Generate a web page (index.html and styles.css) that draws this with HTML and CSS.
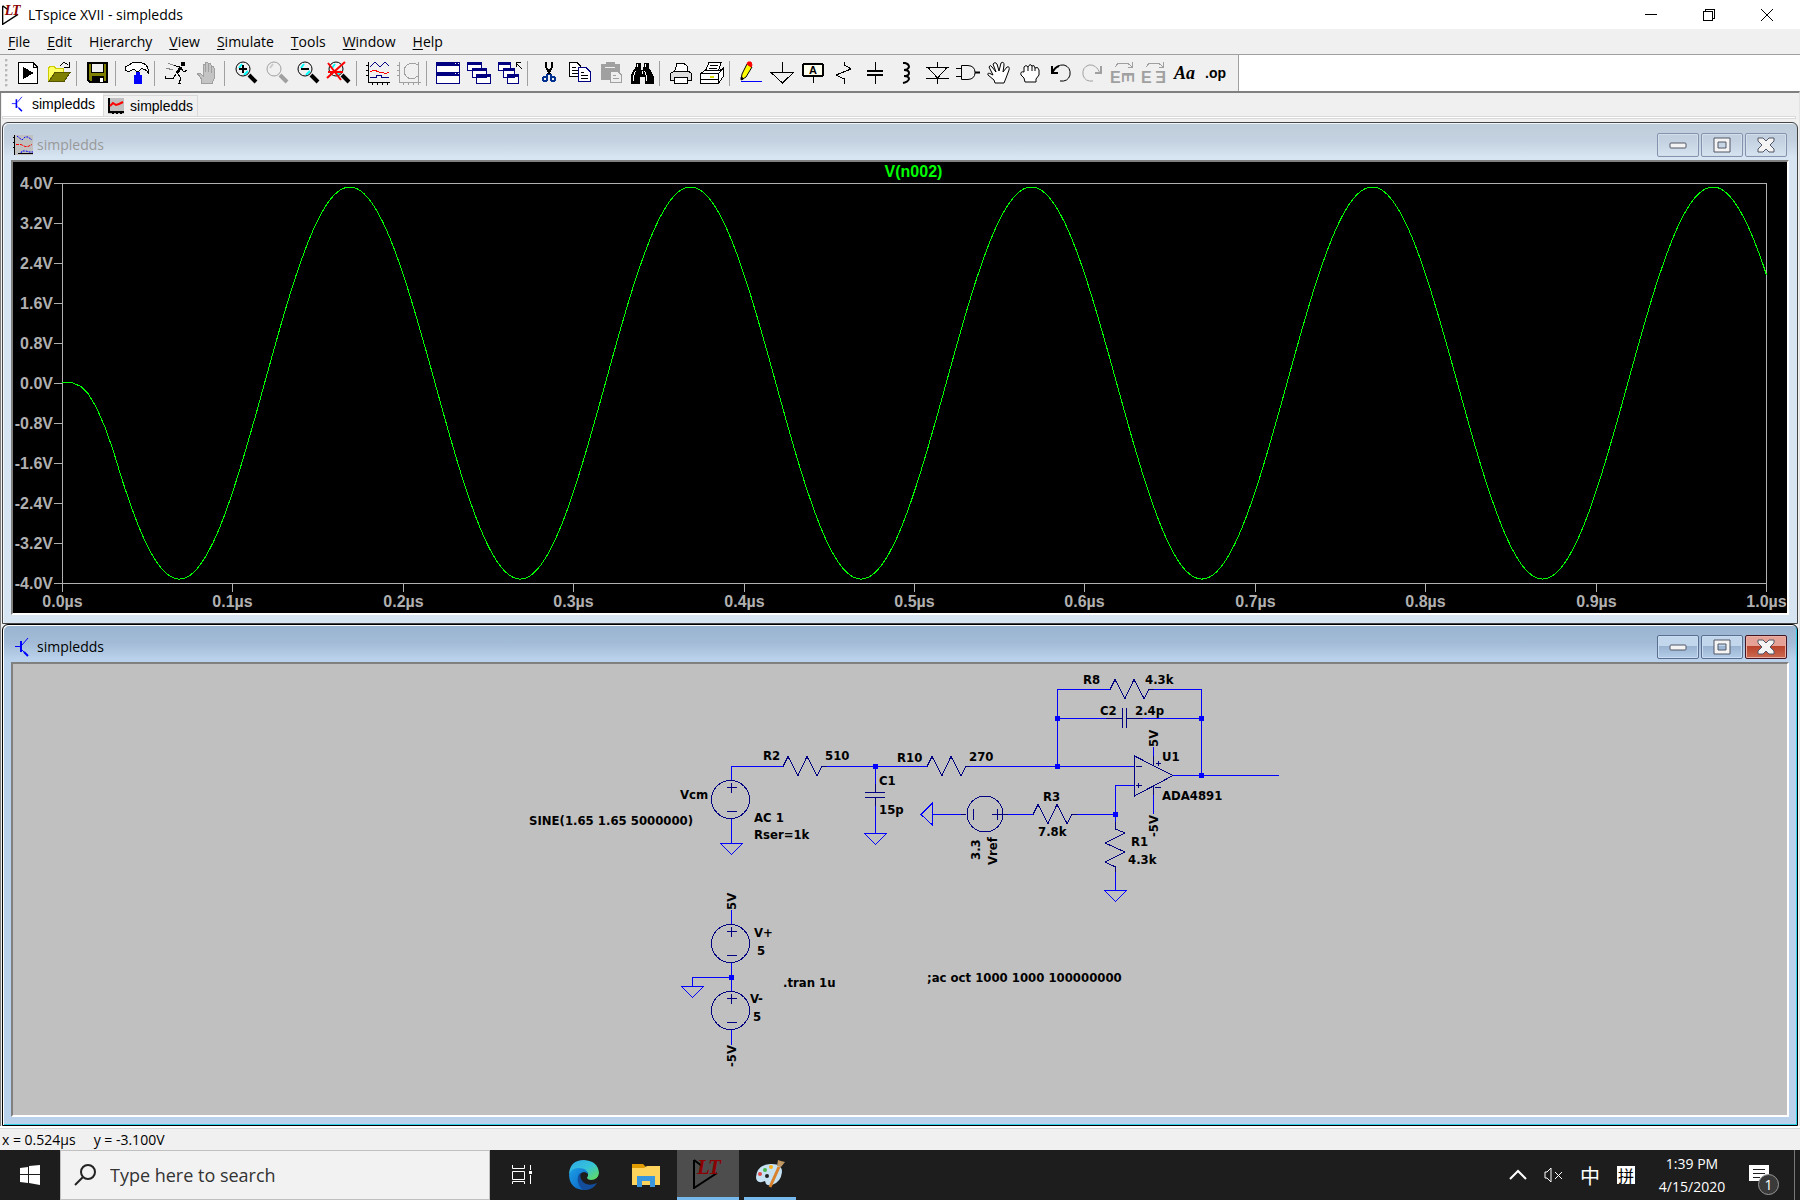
FILE: index.html
```html
<!DOCTYPE html>
<html lang="en">

<head>
  <meta charset="utf-8">
  <title>LTspice XVII - simpledds</title>
  <meta name="viewport" content="width=device-width, initial-scale=1.0">
  <link rel="stylesheet" href="styles.css">
</head>

<body>
  <!-- shared symbols -->
  <svg class="defs" width="0" height="0">
    <defs>
      <symbol id="logo" viewBox="0 0 30 30">
        <path class="logo-line" d="M1 1 V29 L24 14 M1 1 L9 7" />
        <text class="logo-text" x="4" y="15">L</text>
        <text class="logo-text" x="15" y="15">T</text>
      </symbol>
      <symbol id="transistor" viewBox="0 0 16 20">
        <path fill="none" stroke="#00f" stroke-width="1" d="M0 9.500 H6 M7 8 L13 1 M7 13 L12 18" />
        <path fill="none" stroke="#00f" stroke-width="2" d="M6 4 V15 M9 15 L13 19" />
      </symbol>
      <symbol id="min" viewBox="0 0 18 18">
        <rect x="1" y="7" width="16" height="5" rx="1" fill="#f4f4f4" stroke="#535666" />
      </symbol>
      <symbol id="max" viewBox="0 0 18 18">
        <path fill="#f4f4f4" stroke="#535666" fill-rule="evenodd" d="M1 2 H17 V16 H1 Z M5 6 H13 V12 H5 Z" />
      </symbol>
      <symbol id="close" viewBox="0 0 18 18">
        <path fill="#f4f4f4" stroke="#535666" d="M1 2 H6 L9 5 L12 2 H17 V5 L13 9 L17 13 V16 H12 L9 13 L6 16 H1 V13 L5 9 L1 5 Z" />
      </symbol>
      <g id="lens">
        <path stroke="#0ff" stroke-width="2" d="M5 7 L8 3 M10 14 L14 10" />
        <circle cx="9" cy="8" r="7" />
        <path stroke-width="4" d="M15 14 L22 21" />
      </g>
      <g id="src">
        <circle class="part" cx="0" cy="0" r="19" />
        <path class="part" d="M-4 -12 H6 M1 -17 V-7 M-4 12 H6" />
      </g>
      <path id="gnd" class="wire" d="M-11 0 H11 L0 11 Z" />
      <path id="res" class="part" d="M0 0 L5 -10 L15 9 L24 -10 L34 9 L39 0 H44" />
      <rect id="dot" x="-3" y="-3" width="5" height="5" fill="#00f" />
    </defs>
  </svg>

  <div class="app">
    <header class="titlebar">
      <svg class="app-icon"><use href="#logo" /></svg>
      <h1 class="app-title">LTspice XVII - simpledds</h1>
      <div class="caption-buttons">
        <button class="caption-btn" aria-label="Minimize"><svg width="14" height="14"><path d="M1 6.500 H13" /></svg></button>
        <button class="caption-btn" aria-label="Restore"><svg width="14" height="14"><path d="M1.500 3.500 H10.500 V12.500 H1.500 Z M3.500 3 V1.500 H12.500 V10.500 H11" /></svg></button>
        <button class="caption-btn smooth" aria-label="Close"><svg width="14" height="14"><path d="M1 1 L13 13 M13 1 L1 13" /></svg></button>
      </div>
    </header>

    <nav class="menubar">
      <button class="menu"><u>F</u>ile</button>
      <button class="menu"><u>E</u>dit</button>
      <button class="menu">H<u>i</u>erarchy</button>
      <button class="menu"><u>V</u>iew</button>
      <button class="menu"><u>S</u>imulate</button>
      <button class="menu"><u>T</u>ools</button>
      <button class="menu"><u>W</u>indow</button>
      <button class="menu"><u>H</u>elp</button>
    </nav>

    <div class="toolbar-row">
      <div class="toolbar">
        <div class="grip"></div>
        <button class="tool" aria-label="Run"><svg><path fill="#fff" d="M2.500 1.500 H17 L21.500 6 V22.500 H2.500 Z M17 1.500 V6 H21.500" /><path fill="#000" d="M7 6.500 V17.500 L17 12 Z" /></svg></button>
        <button class="tool" aria-label="Open"><svg><path fill="#ff6" stroke="#cc0" d="M1.500 20 V7 L3 5.500 H7 L9 7.500 H16.500 V11 H8 Z" /><path fill="#808000" stroke="#550" d="M2 20.500 L8 11.500 H23 L17 20.500 Z" /><path d="M13 5 Q17 -1 21 4 M22 1 V6 H17" /></svg></button>
        <div class="sep"></div>
        <button class="tool" aria-label="Save"><svg><path fill="#808000" stroke-width="2" d="M2 2 H21 V21 H4 L2 19 Z" /><path fill="#efefef" d="M5.500 2 H17.500 V11.500 H5.500 Z" /><path fill="#000" d="M6 15 H17 V21 H6 Z" /><path stroke="#fff" stroke-width="3" d="M15 17 V21" /></svg></button>
        <div class="sep"></div>
        <button class="tool" aria-label="Control Panel"><svg><path fill="#fff" d="M0.500 5.500 L4 4 L8 1.500 H16 Q22 3 23.500 9 V12 Q20 7 16 8 L14 10 H11 L9 8 L5 10 H2 L0.500 9 Z" /><path fill="#00f" stroke="#00f" d="M11 11 H14 V14 H16 V22 H9 V14 H11 Z" /></svg></button>
        <div class="sep"></div>
        <button class="tool" aria-label="Run simulation"><svg><path stroke="#888" d="M4 2 L11 5 M2 7 L9 9" /><circle cx="19" cy="3" r="2" fill="#000" /><path stroke-width="3" d="M17 6 L13 12" /><path d="M10 4.500 L16 6 L20 11 L23 9 M12 13 L9 17.500 H1 V15 M13 12 L17 17 L15 22 H17" /></svg></button>
        <button class="tool off" aria-label="Halt"><svg><path fill="#c4c4c4" d="M6.500 22.500 V18 L2 12 H5 L8 15 V4 Q9 2 10 4 V11 V2 Q11.500 0 13 2 V11 V3 Q15 1 16 4 V12 V6 Q18 4 19 7 V18 L17 22.500 Z" /></svg></button>
        <div class="sep"></div>
        <button class="tool smooth" aria-label="Zoom in"><svg><use href="#lens" /><path stroke-width="2" d="M5 8 H13 M9 4 V12" /></svg></button>
        <button class="tool off smooth" aria-label="Zoom area"><svg><circle cx="9" cy="8" r="7" /><path stroke-width="4" d="M15 14 L22 21" /><path stroke="#ccc" stroke-width="2" d="M5 7 L8 3" /></svg></button>
        <button class="tool smooth" aria-label="Zoom out"><svg><use href="#lens" /><path stroke-width="2" d="M5 8 H13" /></svg></button>
        <button class="tool smooth" aria-label="Zoom to fit"><svg><use href="#lens" /><path stroke="#f00" stroke-width="2" d="M1 2 L14 19 M18 1 L0 17 M1 11 H16" /></svg></button>
        <div class="sep"></div>
        <button class="tool" aria-label="Autorange"><svg><path d="M2.500 1 V21.500 H24 M0 4.500 H3 M0 9.500 H3 M0 14.500 H3 M6.500 21 V24 M11.500 21 V24 M16.500 21 V24 M21.500 21 V24" /><path stroke="#000080" d="M4 6 L9 1 L14 6 L19 1 L23 5 M4 16.500 H10 V14.500 H15 V16.500 H23" /><path stroke="#f00" d="M4 11 L8 9 L13 11 H17 L19 13 L23 11" /></svg></button>
        <button class="tool off" aria-label="Smith chart"><svg><path d="M2.500 1 V21.500 H24 M0 4.500 H3 M0 9.500 H3 M0 14.500 H3 M6.500 21 V24 M11.500 21 V24 M16.500 21 V24 M21.500 1 V24" /><path d="M21 4 L17 2 Q8 2 7 10 Q8 18 16 18 L21 15" /></svg></button>
        <div class="sep"></div>
        <button class="tool navy" aria-label="Tile"><svg><path fill="#fff" d="M0.500 1.500 H23.500 V22.500 H0.500 Z" /><path stroke-width="4" d="M0 3 H24 M0 13 H24" /><path stroke="#fff" d="M19 2.500 H20 M22 2.500 H23 M19 12.500 H20 M22 12.500 H23" /></svg></button>
        <button class="tool navy" aria-label="Cascade"><svg><path fill="#fff" d="M0.500 1.500 H14.500 V9.500 H0.500 Z M5.500 7.500 H19.500 V16.500 H5.500 Z M9.500 13.500 H23.500 V22.500 H9.500 Z" /><path stroke-width="3" d="M0 2.500 H15 M5 8.500 H20 M9 14.500 H24" /></svg></button>
        <button class="tool navy" aria-label="Close all"><svg><path fill="#fff" d="M0.500 1.500 H12.500 V9.500 H0.500 Z M5.500 7.500 H16.500 V16.500 H5.500 Z M9.500 13.500 H20.500 V22.500 H9.500 Z" /><path stroke-width="3" d="M0 2.500 H13 M5 8.500 H17 M9 14.500 H21" /><path stroke="#000" d="M24 8 L18 2 M18.500 6 V1.500 H23" /></svg></button>
        <div class="sep"></div>
        <button class="tool" aria-label="Cut"><svg><path stroke-width="2" d="M9 1 V6 L13 13 M15 1 V6 L11 13" /><g stroke="#003090" stroke-width="2"><circle cx="8" cy="18" r="2" /><circle cx="16" cy="18" r="2" /><path d="M11 13 L9 16 M13 13 L15 16" /></g></svg></button>
        <button class="tool" aria-label="Copy"><svg><path fill="#fff" d="M1.500 1.500 H9 L12.500 5 V15.500 H1.500 Z M4 6.500 H8 M4 9.500 H10 M4 12.500 H10" /><path fill="#fff" stroke="#000080" d="M10.500 6.500 H18 L22.500 11 V20.500 H10.500 Z" /><path d="M13 11.500 H16 M13 14.500 H20 M13 17.500 H20" /></svg></button>
        <button class="tool off" aria-label="Paste"><svg><path fill="#a0a0a0" d="M2 3 H7 V1 H15 V3 H20 V18 H2 Z" /><path stroke="#eee" d="M6 6.500 H16" /><path fill="#eee" d="M11.500 10.500 H19 L22.500 14 V21.500 H11.500 Z M14 14.500 H17 M14 17.500 H20" /></svg></button>
        <button class="tool" aria-label="Find"><svg><path fill="#000" d="M6 2 H10 V6 L11 9 H13 L14 6 V2 H18 V6 L23 15 V22 H15 V15 H9 V22 H1 V15 L6 6 Z" /><path stroke="#fff" d="M7.500 3 V6 M15.500 3 V6 M5.500 10 L3.500 15 V20 M14.500 10 L16.500 15 V20 M12 10 V13" /></svg></button>
        <div class="sep"></div>
        <button class="tool" aria-label="Print"><svg><path fill="#fff" d="M5 12 L8 2.500 H15 L18 5 V12" /><path fill="#ddd" d="M1.500 12.500 L5 10.500 H20 L22.500 12.500 V19.500 H1.500 Z" /><path fill="#fff" d="M5.500 16.500 H18.500 V22.500 H5.500 Z" /></svg></button>
        <button class="tool" aria-label="Print setup"><svg><path fill="#fff" d="M5 11 L9 1.500 H21 L18 11" /><path d="M10 4.500 H18 M9 7.500 H17" /><path fill="#fff" d="M0.500 12.500 L5 9.500 H20 L23.500 6.500 V15 L18.500 22.500 H0.500 Z M0.500 12.500 H18.500 V22 M18.500 12.500 L23 8" /><path d="M1 18.500 H18" /><path stroke="#dd0" stroke-width="2" d="M10 16 H14" /></svg></button>
        <div class="sep"></div>
        <button class="tool smooth" aria-label="Wire"><svg><path fill="#ff0" d="M3 13 L8 3 L13 6 L7 16 L2 19 Z" /><path fill="#f00" stroke="#f00" d="M8 3 L9 1 H12 L13 4 L12 6 Z" /><path stroke="#00f" d="M2 20.500 H23" /><path stroke-width="3" d="M2 18 L4 17" /></svg></button>
        <button class="tool" aria-label="Ground"><svg><path d="M12.500 1 V11.500 M1 11.500 H23.500 L12.500 22 Z" /></svg></button>
        <button class="tool" aria-label="Label net"><svg><rect x="2" y="3" width="20" height="12" rx="2" fill="#ffe" stroke-width="2" /><path d="M12.500 16 V22" /><text class="tool-label-a" x="8" y="13">A</text></svg></button>
        <button class="tool" aria-label="Resistor"><svg><path d="M12.500 1 V4 L19 8 L4 14 L12.500 18 V23" /></svg></button>
        <button class="tool" aria-label="Capacitor"><svg><path d="M12.500 1 V9 M12.500 14 V23" /><path stroke-width="2" d="M4 10 H20 M4 14 H20" /></svg></button>
        <button class="tool smooth" aria-label="Inductor"><svg><path stroke-width="2" d="M9 2 H11 Q15 3 15 6 Q14 9 10 9 Q15 9 15 12 Q15 15 10 15 Q15 15 15 18 Q14 21 9 22" /></svg></button>
        <button class="tool" aria-label="Diode"><svg><path d="M12.500 1 V6 M1 6.500 H24 M3 6.500 L12.500 17 L22 6.500 M1 17.500 H24 M12.500 17 V23" /></svg></button>
        <button class="tool smooth" aria-label="Component"><svg><path d="M5.500 4.500 H12 Q19 5 19 11.500 Q19 18 12 18.500 H5.500 Z M0 7.500 H5 M0 15.500 H5" /><path stroke-width="2" d="M19 11.500 H24" /></svg></button>
        <button class="tool smooth" aria-label="Move"><svg><path fill="#fff" d="M8 22 L7 19 L1 14 Q0 11 4 13 L6 14 L2 6 Q3 3 5 6 L9 11 L6 3 Q8 0 10 3 L12 10 L14 2 Q17 0 17 4 L16 11 L20 6 Q23 5 22 9 L19 17 L17 22 Z" /></svg></button>
        <button class="tool smooth" aria-label="Drag"><svg><path fill="#fff" d="M7 21 L6 17 L3 14 Q2 10 6 11 V6 Q8 3 10 6 Q12 2 14 5 Q16 3 17 7 Q20 5 21 9 V14 L18 18 V21 Z M10 6 V10 M14 5 V10 M17 7 V10" /></svg></button>
        <button class="tool smooth" aria-label="Undo"><svg><path d="M3 5 V12 H9 M3 12 Q8 3 15 4 Q22 6 21 14 Q19 21 11 20" /><path stroke-width="2" d="M3 5 V12 H9 M3 12 Q6 6 10 5" /></svg></button>
        <button class="tool off smooth" aria-label="Redo"><svg><path d="M21 5 V12 H15 M20 12 Q16 3 9 4 Q2 6 3 14 Q5 21 13 20" /><path stroke-width="2" d="M21 5 V12 H15" /></svg></button>
        <button class="tool off" aria-label="Rotate"><svg><path d="M4 6 L7 2.500 H17 L21 6 M21.500 1 V6.500 H17" /><text class="tool-label-e" x="-1" y="22">E</text><text class="tool-label-e" transform="translate(11 11) rotate(90)" x="0" y="0">E</text></svg></button>
        <button class="tool off" aria-label="Mirror"><svg><path d="M4 6 L7 2.500 H17 L21 6 M21.500 1 V6.500 H17" /><text class="tool-label-e" x="-1" y="22">E</text><text class="tool-label-e" transform="rotate(180 18 16)" x="12" y="22">E</text></svg></button>
        <button class="tool tool-aa" aria-label="Text">Aa</button>
        <button class="tool tool-op" aria-label="SPICE directive">.op</button>
      </div>
    </div>

    <main class="workspace">
      <div class="tabs">
        <button class="tab active"><svg class="tab-icon" viewBox="0 0 16 20"><use href="#transistor" /></svg>simpledds</button>
        <button class="tab"><svg class="tab-icon" viewBox="0 0 16 16"><path fill="#c0c0c0" d="M0 0 H16 V16 H0 Z" /><path fill="none" stroke="#000" stroke-width="2" d="M1 0 V14 H16 M5 13 V16 M9 13 V16 M13 13 V16" /><path fill="none" stroke="#f00" stroke-width="2" d="M2 8 L5 5 L8 7 L11 6 L15 4" /></svg>simpledds</button>
      </div>
      <div class="tab-edge"></div>

      <section class="window inactive">
        <div class="window-title">
          <svg class="window-icon" viewBox="0 0 20 20"><path fill="#c0c0c0" d="M1 0 H20 V20 H1 Z" /><path fill="none" stroke="#000" d="M1.500 0 V20 M0 2.500 H2 M0 7.500 H2 M0 12.500 H2 M5 18.500 H20" /><path fill="none" stroke="#00f" stroke-dasharray="2 1" d="M4 1 L9 5 L12 2 H15 L19 5 M8 18 L9 16 H13 L16 17 H20" /><path fill="none" stroke="#f00" stroke-dasharray="3 1" d="M3 9.500 H8 L12 11.500 H15 L19 9.500" /></svg>
          <h2 class="window-name">simpledds</h2>
          <button class="win-btn" aria-label="Minimize"><svg><use href="#min" /></svg></button>
          <button class="win-btn" aria-label="Maximize"><svg><use href="#max" /></svg></button>
          <button class="win-btn" aria-label="Close"><svg><use href="#close" /></svg></button>
        </div>
        <div class="client">
          <svg class="plot" id="plot"></svg>
        </div>
      </section>

      <section class="window focused">
        <div class="window-title">
          <svg class="window-icon" viewBox="0 0 16 20"><use href="#transistor" /></svg>
          <h2 class="window-name">simpledds</h2>
          <button class="win-btn" aria-label="Minimize"><svg><use href="#min" /></svg></button>
          <button class="win-btn" aria-label="Maximize"><svg><use href="#max" /></svg></button>
          <button class="win-btn win-close" aria-label="Close"><svg><use href="#close" /></svg></button>
        </div>
        <div class="client">
          <svg class="schematic">
            <g transform="translate(-13 -664)">
              <!-- input source and filter -->
              <path class="wire" d="M731.500 780 V766.500 H783 M826 766.500 H927 M731.500 818 V843 M875.500 766 V784 M875.500 806 V833" />
              <use href="#src" x="730.500" y="799.500" />
              <use href="#gnd" x="731.500" y="843.500" />
              <use href="#res" x="783" y="766.500" />
              <path class="part" d="M875.500 784 V792.500 M865 792.500 H885 M865 797.500 H885 M875.500 797 V806" />
              <use href="#gnd" x="875.500" y="833.500" />
              <use href="#res" x="927" y="766.500" />
              <use href="#dot" x="876" y="767" />

              <!-- feedback network -->
              <path class="wire" d="M970 766.500 H1134 M1057.500 766 V689.500 H1110 M1153 689.500 H1201.500 V775 M1057 718.500 H1106 M1143 718.500 H1201" />
              <use href="#res" x="1110" y="689.500" />
              <path class="part" d="M1106 718.500 H1122 M1122.500 708 V728 M1126.500 708 V728 M1127 718.500 H1143" />
              <use href="#dot" x="1058" y="719" />
              <use href="#dot" x="1202" y="719" />
              <use href="#dot" x="1058" y="767" />
              <use href="#dot" x="1202" y="776" />

              <!-- op amp -->
              <path class="part" d="M1134.500 756 V796 L1173 775.500 Z M1136 766.500 H1142 M1136 785.500 H1142 M1138.500 783 V788 M1153.500 756 V766 M1153.500 785 V795 M1156 763.500 H1161 M1158.500 761 V766 M1155 787.500 H1161" />
              <path class="wire" d="M1173 775.500 H1279 M1153.500 747 V756 M1153.500 795 V814 M1134 785.500 H1115.500 V814" />

              <!-- reference branch -->
              <path class="wire" d="M932 814.500 H961 M932.500 803 V825 L921 814.500 Z M1008 814.500 H1033 M1076 814.500 H1115.500 V822 M1115.500 872 V890" />
              <circle class="part" cx="985" cy="814" r="18" />
              <path class="part" d="M961 814.500 H966 M992 814.500 H1008 M997.500 809 V820 M973.500 809 V820" />
              <use href="#res" x="1033" y="814.500" />
              <path class="part" d="M1115.500 822 V829 L1125 833 L1105 843 L1125 852 L1105 862 L1115.500 867 V872" />
              <use href="#gnd" x="1115.500" y="890.500" />
              <use href="#dot" x="1116" y="815" />

              <!-- supplies -->
              <path class="wire" d="M731.500 910 V924 M731.500 962 V991 M731 977.500 H692.500 V986 M731.500 1029 V1045" />
              <use href="#src" x="730.500" y="943.500" />
              <use href="#src" x="730.500" y="1010.500" />
              <use href="#gnd" x="692.500" y="986.500" />
              <use href="#dot" x="732" y="978" />

              <g class="label">
                <text x="763" y="760">R2</text>
                <text x="825" y="760">510</text>
                <text x="897" y="762">R10</text>
                <text x="969" y="761">270</text>
                <text x="680" y="799">Vcm</text>
                <text x="529" y="825">SINE(1.65 1.65 5000000)</text>
                <text x="754" y="822">AC 1</text>
                <text x="754" y="839">Rser=1k</text>
                <text x="879" y="785">C1</text>
                <text x="879" y="814">15p</text>
                <text x="1083" y="684">R8</text>
                <text x="1145" y="684">4.3k</text>
                <text x="1100" y="715">C2</text>
                <text x="1135" y="715">2.4p</text>
                <text x="1162" y="761">U1</text>
                <text x="1162" y="800">ADA4891</text>
                <text x="1043" y="801">R3</text>
                <text x="1038" y="836">7.8k</text>
                <text x="1131" y="846">R1</text>
                <text x="1128" y="864">4.3k</text>
                <text transform="translate(980 860) rotate(-90)">3.3</text>
                <text transform="translate(997 865) rotate(-90)">Vref</text>
                <text transform="translate(1158 747) rotate(-90)">5V</text>
                <text transform="translate(1158 837) rotate(-90)">-5V</text>
                <text transform="translate(736 910) rotate(-90)">5V</text>
                <text transform="translate(736 1067) rotate(-90)">-5V</text>
                <text x="754" y="937">V+</text>
                <text x="757" y="955">5</text>
                <text x="750" y="1003">V-</text>
                <text x="753" y="1021">5</text>
                <text x="783" y="987">.tran 1u</text>
                <text x="927" y="982">;ac oct 1000 1000 100000000</text>
              </g>
            </g>
          </svg>
        </div>
      </section>
    </main>

    <footer class="statusbar">
      <span>x = 0.524µs</span>
      <span>y = -3.100V</span>
    </footer>
  </div>

  <div class="taskbar">
    <button class="start" aria-label="Start"><svg width="20" height="20"><path fill="#fff" d="M0 3 L8 2 V9 H0 Z M9 1 L20 0 V9 H9 Z M0 10 H8 V18 L0 17 Z M9 10 H20 V20 L9 18 Z" /></svg></button>
    <label class="search">
      <svg width="22" height="22"><path fill="none" stroke="#222" stroke-width="2" d="M1 21 L9 13" /><circle cx="14" cy="8" r="7" fill="none" stroke="#222" stroke-width="2" /></svg>
      <input class="search-input" type="text" placeholder="Type here to search" aria-label="Search">
    </label>
    <button class="task" aria-label="Task View"><svg width="20" height="20"><path fill="none" stroke="#fff" d="M0.500 0 V3.500 H12.500 V0 M0.500 6.500 H12.500 V14.500 H0.500 Z M0.500 19 V16.500 H12.500 V19 M18.500 0 V5 M18.500 10 V19" /><path fill="#fff" d="M17 6 H20 V9 H17 Z" /></svg></button>
    <button class="task" aria-label="Edge">
      <svg width="30" height="30" viewBox="0 0 30 30">
        <defs>
          <linearGradient id="edge-top" x1="0" x2="1" y1="0" y2="1"><stop offset="0" stop-color="#2fa8ea" /><stop offset=".5" stop-color="#35c3d8" /><stop offset="1" stop-color="#68e050" /></linearGradient>
          <linearGradient id="edge-side" x1="0" x2="1" y1="0" y2="1"><stop offset="0" stop-color="#1ca0e8" /><stop offset="1" stop-color="#0b5fc0" /></linearGradient>
        </defs>
        <path fill="url(#edge-top)" d="M0 14 Q1 0 15 0 Q29 1 30 13 Q29 20 22 20 Q16 19 19 16 Q20 11 14 11 Q7 10 0 14 Z" />
        <path fill="url(#edge-side)" d="M0 15 Q2 8 10 8 Q18 8 19 14 Q15 10 11 14 Q7 21 16 30 Q1 30 0 15 Z" />
        <path fill="#134e9c" d="M10 14 Q6 23 14 30 Q23 31 28 23 Q19 27 14 22 Q10 18 12 13 Z" />
      </svg>
    </button>
    <button class="task" aria-label="File Explorer"><svg width="28" height="24"><path fill="#e09c00" d="M0 1 H11 L14 4 V10 H0 Z" /><path fill="#ffd45c" d="M0 5 L12 5 L15 3 H28 V22 H0 Z" /><path fill="#3a96dd" d="M5 13 H23 V24 H18 V18 H10 V24 H5 Z" /></svg></button>
    <button class="task current" aria-label="LTspice"><svg width="30" height="30"><use href="#logo" /></svg></button>
    <button class="task open" aria-label="Paint">
      <svg width="30" height="30" viewBox="0 0 30 30">
        <path fill="#c5e1f2" d="M1 18 Q2 6 15 5 Q27 4 27 13 Q26 23 17 26 Q13 27 11 25 L10 22 L7 23 Q1 24 1 18 Z" />
        <circle cx="5" cy="15" r="2" fill="#e34848" /><circle cx="10" cy="11" r="2" fill="#4cb648" /><circle cx="16" cy="8" r="2" fill="#f5b21c" /><circle cx="12" cy="17" r="2" fill="#222" />
        <path stroke="#d9812c" stroke-width="3" d="M15 28 L24 8" /><path fill="#c19762" d="M22 7 L23 1 L26 2 L30 3 L26 8 Z" />
      </svg>
    </button>
    <div class="tray">
      <button class="tray-btn" aria-label="Hidden icons"><svg width="18" height="12"><path fill="none" stroke="#fff" stroke-width="2" d="M1 10 L9 2 L17 10" /></svg></button>
      <button class="tray-btn" aria-label="Volume muted"><svg width="20" height="16"><path fill="none" stroke="#fff" d="M1 5 H3 L7 1 V15 L3 11 H1 Z M11 5 L18 12 M18 5 L11 12" /></svg></button>
      <button class="tray-btn ime">中</button>
      <button class="tray-btn"><span class="pinyin">拼</span></button>
      <button class="clock"><span>1:39 PM</span><span>4/15/2020</span></button>
      <button class="notify" aria-label="Notifications">
        <svg width="20" height="20"><path fill="#fff" d="M0 0 H20 V16 H15 V20 L10 16 H0 Z" /><path stroke="#1f1f1f" d="M4 4.500 H16 M4 8.500 H16 M4 12.500 H11" /></svg>
        <span class="badge">1</span>
      </button>
      <button class="show-desktop" aria-label="Show desktop"></button>
    </div>
  </div>

  <script>
    const plot = document.querySelector("#plot")
    const NS = "http://www.w3.org/2000/svg"

    function add(tag, cls, attrs, text) {
      const el = document.createElementNS(NS, tag)
      el.setAttribute("class", cls)
      for (const key in attrs) el.setAttribute(key, attrs[key])
      if (text) el.textContent = text
      plot.appendChild(el)
    }

    function draw() {
      plot.textContent = ""
      const left = 49.5
      const top = 21.5
      const right = plot.clientWidth - 20.5
      const bottom = plot.clientHeight - 29.5
      const w = right - left
      const h = bottom - top

      add("path", "axis", { d: `M${left} ${top} H${right} V${bottom} H${left} Z` })

      // voltage axis
      for (let i = 0; i <= 10; i++) {
        const y = Math.floor(top + h * i / 10) + 0.5
        const v = (4 - i * 0.8).toFixed(1).replace("-0.0", "0.0")
        add("path", "axis", { d: `M${left - 9} ${y} H${left}` })
        add("text", "tick tick-y", { x: 40, y: y + 5.5 }, v + "V")
      }

      // time axis
      for (let i = 0; i <= 10; i++) {
        const x = Math.floor(left + w * i / 10) + 0.5
        add("path", "axis", { d: `M${x} ${bottom} V${bottom + 8}` })
        add("text", "tick tick-x", { x: x, y: bottom + 23.5 }, (i / 10).toFixed(1) + "µs")
      }

      add("text", "trace-name", { x: left + w / 2 - 1, y: 15 }, "V(n002)")

      // startup of the output, then 5MHz steady state
      const t0 = [[0, 0.02], [0.006, 0.01], [0.011, -0.06], [0.015, -0.2], [0.02, -0.49], [0.025, -0.88]]
      const pts = t0.slice()
      for (let t = 0.03; t <= 1.0005; t += 0.001) {
        pts.push([t, 0.01 - 3.92 * Math.cos(2 * Math.PI * (t - 0.0686) / 0.2)])
      }
      const line = pts.map(p => (left + w * p[0]).toFixed(1) + "," + (top + h * (4 - p[1]) / 8).toFixed(1))
      add("polyline", "trace", { points: line.join(" ") })
    }

    draw()
    window.onresize = draw
  </script>
</body>

</html>
```
FILE: styles.css
```css
/* variables */
:root {
  --face: #f0f0f0;
  --ui-font: 'Open Sans', 'Noto Sans', sans-serif;
  --cjk-font: 'Noto Sans CJK SC', sans-serif;
  --task-bg: #1d1d1d;
  --accent: #76b9ed;
}

* {
  box-sizing: border-box;
}

body {
  margin: 0;
  height: 100vh;
  display: flex;
  flex-direction: column;
  overflow: hidden;
  font-family: var(--ui-font);
  font-size: 14px;
  color: #000;
  background: var(--face);
}

h1, h2 {
  margin: 0;
  font-size: 14px;
  font-weight: normal;
}

button {
  border: 0;
  margin: 0;
  padding: 0;
  background: none;
  color: inherit;
  font-family: inherit;
  font-size: inherit;
}

svg {
  display: block;
  flex: none;
}

.defs {
  position: absolute;
}

.logo-line {
  fill: none;
  stroke: #000;
  stroke-width: 2;
}

.logo-text {
  font: italic bold 21px 'Liberation Serif', serif;
  fill: #8b0000;
}

.app {
  flex: 1;
  min-height: 0;
  display: flex;
  flex-direction: column;
}

/* title and menu */
.titlebar {
  height: 29px;
  display: flex;
  align-items: center;
  padding: 0 4px 0 2px;
  background: #fff;
}

.app-icon {
  width: 20px;
  height: 20px;
}

.app-title {
  flex: 1;
  padding-left: 6px;
}

.caption-buttons {
  display: flex;
}

.caption-btn {
  width: 58px;
  height: 29px;
  display: flex;
  align-items: center;
  justify-content: center;
}

.caption-btn path {
  fill: none;
  stroke: #000;
  shape-rendering: crispEdges;
}

.caption-btn.smooth path {
  shape-rendering: auto;
}

.menubar {
  height: 26px;
  display: flex;
  gap: 1px;
  border-bottom: 1px solid #a0a0a0;
}

.menu {
  padding: 0 8px;
}

.menu u {
  text-underline-offset: 2px;
}

/* toolbar */
.toolbar-row {
  height: 36px;
  display: flex;
  background: #fff;
}

.toolbar {
  display: flex;
  align-items: center;
  padding: 0 7px 0 5px;
  border-right: 1px solid #a0a0a0;
  background: var(--face);
}

.grip {
  width: 7px;
  height: 28px;
  background: radial-gradient(circle at 1px 1px, #b8b8b8 1px, transparent 2px) 0 0 / 8px 5px;
}

.tool {
  width: 31px;
  height: 32px;
  display: flex;
  align-items: center;
  justify-content: center;
}

.tool svg {
  width: 24px;
  height: 24px;
  fill: none;
  stroke: #000;
  overflow: visible;
  shape-rendering: crispEdges;
}

.tool.smooth svg {
  shape-rendering: auto;
}

.tool.off svg {
  stroke: #a0a0a0;
}

.tool.navy svg {
  stroke: #000080;
}

.tool-label-a {
  font: bold 11px 'Liberation Sans', sans-serif;
  fill: #000;
  stroke: none;
}

.tool-label-e {
  font: bold 16px 'Liberation Sans', sans-serif;
  fill: #a0a0a0;
  stroke: none;
}

.tool-aa {
  font: italic bold 18px 'Liberation Serif', serif;
}

.tool-op {
  font: bold 14px 'Liberation Sans', sans-serif;
}

.sep {
  width: 8px;
  height: 25px;
  padding-left: 2px;
}

.sep::before {
  content: "";
  display: block;
  width: 1px;
  height: 25px;
  background: #a0a0a0;
}

/* document area */
.workspace {
  flex: 1;
  min-height: 0;
  display: flex;
  flex-direction: column;
  padding: 0 1px 0 1px;
  border-top: 2px solid #808080;
  border-left: 1px solid #808080;
  border-right: 1px solid #e3e3e3;
  background: var(--face);
}

.tabs {
  height: 23px;
  display: flex;
  align-items: flex-end;
  font-family: 'Liberation Sans', sans-serif;
}

.tab {
  height: 21px;
  display: flex;
  align-items: center;
  padding: 0 4px;
  border: 1px solid #d9d9d9;
  border-bottom: 0;
}

.tab.active {
  height: 23px;
  padding: 0 8px 2px;
  border: 0;
  background: #fff;
}

.tab-icon {
  width: 16px;
  height: 16px;
  margin-right: 6px;
}

.tab-edge {
  height: 3px;
  margin: 0 2px 3px 0;
  border: 1px solid #d9d9d9;
  background: #fff;
}

.window {
  flex: 1;
  min-height: 0;
  display: flex;
  flex-direction: column;
  padding: 0 8px 8px;
  border: 1px solid #444;
  border-radius: 6px 6px 0 0;
}

.window.inactive {
  background: linear-gradient(#bfcddb, #c3d1e0 18px, #d7e4f2 34px);
  box-shadow: inset 1px 1px #f2f6fb;
}

.window.focused {
  border-color: #000;
  background: linear-gradient(#99b4d1, #a3bbd6 18px, #b9d1ea 34px);
  box-shadow: inset 1px 1px #fff, inset -1px -1px #30d0e8;
}

.window-title {
  height: 37px;
  display: flex;
  align-items: center;
  gap: 2px;
  flex: none;
  padding: 6px 2px 0 2px;
}

.window-icon {
  width: 20px;
  height: 20px;
}

.window-name {
  flex: 1;
  padding-left: 2px;
}

.inactive .window-name {
  color: #999;
}

.win-btn {
  width: 42px;
  height: 24px;
  display: flex;
  align-items: center;
  justify-content: center;
  border: 1px solid #8593ae;
  border-radius: 2px;
  box-shadow: inset 0 0 0 1px #d3deeb;
}

.win-btn svg {
  width: 18px;
  height: 18px;
}

.focused .win-btn {
  border-color: #5a6f90;
  background: linear-gradient(#c3d7ec 45%, #98b2d0 45%, #b4cde8);
  box-shadow: inset 0 0 0 1px #c8dcf2;
}

.focused .win-close {
  border-color: #431422;
  background: linear-gradient(#e6a196 45%, #b9412a 45%, #cb6a50);
  box-shadow: inset 0 0 0 1px #eab0a6;
}

.client {
  flex: 1;
  min-height: 0;
  border: 2px solid;
  border-color: #808080 #fff #fff #808080;
  background: #c0c0c0;
}

/* waveform */
.plot, .schematic {
  width: 100%;
  height: 100%;
}

.plot {
  background: #000;
}

.axis, .trace {
  fill: none;
  stroke: #b0b0b0;
  shape-rendering: crispEdges;
}

.trace {
  stroke: #0f0;
}

.tick, .trace-name {
  font: bold 16px 'Liberation Sans', sans-serif;
  fill: #b0b0b0;
}

.tick-y {
  text-anchor: end;
}

.tick-x {
  text-anchor: middle;
}

.trace-name {
  text-anchor: middle;
  fill: #0f0;
}

/* schematic */
.wire, .part {
  fill: none;
  stroke: #00f;
  shape-rendering: crispEdges;
}

.part {
  stroke: #000080;
}

.label {
  font: bold 13px 'DejaVu Sans Condensed', 'DejaVu Sans', sans-serif;
}

/* status bar */
.statusbar {
  height: 24px;
  display: flex;
  align-items: center;
  gap: 18px;
  padding: 1px 2px 0;
  border-top: 2px solid #fff;
  box-shadow: inset 0 1px #d9d9d9;
}

/* taskbar */
.taskbar {
  height: 50px;
  flex: none;
  display: flex;
  background: var(--task-bg);
  color: #fff;
}

.start {
  width: 60px;
  display: flex;
  align-items: center;
  justify-content: center;
}

.search {
  width: 430px;
  display: flex;
  align-items: center;
  gap: 14px;
  margin-right: 1px;
  padding-left: 13px;
  border: 1px solid #c0c0c0;
  background: #f2f2f2;
}

.search-input {
  flex: 1;
  min-width: 0;
  padding: 0;
  border: 0;
  outline: 0;
  background: none;
  font-family: inherit;
  font-size: 18px;
}

.search-input::placeholder {
  color: #333;
}

.task {
  width: 62px;
  display: flex;
  align-items: center;
  justify-content: center;
}

.current {
  border-bottom: 3px solid var(--accent);
  background: #4d4d4d;
}

.open {
  width: 52px;
  margin: 0 5px;
  border-bottom: 3px solid var(--accent);
}

.tray {
  margin-left: auto;
  display: flex;
  align-items: stretch;
}

.tray-btn {
  width: 36px;
  display: flex;
  align-items: center;
  justify-content: center;
}

.ime {
  font: 20px var(--cjk-font);
}

.pinyin {
  width: 18px;
  height: 18px;
  background: #fff;
  color: #000;
  font: 16px/18px var(--cjk-font);
}

.clock {
  width: 84px;
  margin-left: 6px;
  line-height: 23px;
  display: flex;
  flex-direction: column;
  align-items: center;
  justify-content: center;
}

.notify {
  width: 60px;
  position: relative;
  display: flex;
  align-items: center;
  padding-left: 15px;
}

.badge {
  position: absolute;
  left: 24px;
  top: 24px;
  width: 21px;
  height: 21px;
  border: 1px solid #999;
  border-radius: 50%;
  background: #3a3a3a;
  text-align: center;
  line-height: 19px;
}

.show-desktop {
  width: 6px;
  border-left: 1px solid #777;
}
```
